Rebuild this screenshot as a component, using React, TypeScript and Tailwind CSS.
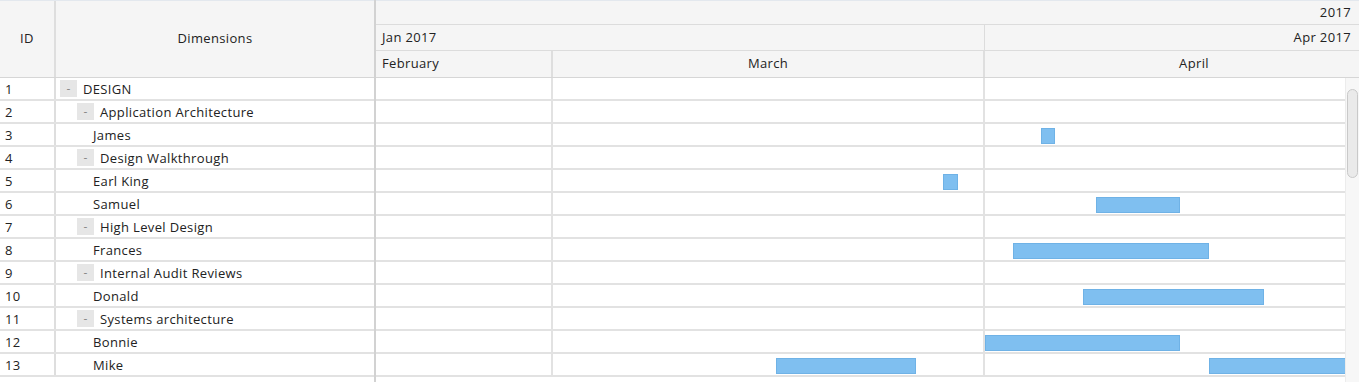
import clsx from 'clsx';

type Row = { id: number; name: string; level: 0 | 1 | 2; bars?: [number, number][] };

// bar x ranges are absolute page coords; timeline starts at 376
const ROWS: Row[] = [
  { id: 1, name: 'DESIGN', level: 0 },
  { id: 2, name: 'Application Architecture', level: 1 },
  { id: 3, name: 'James', level: 2, bars: [[1041, 1055]] },
  { id: 4, name: 'Design Walkthrough', level: 1 },
  { id: 5, name: 'Earl King', level: 2, bars: [[943, 958]] },
  { id: 6, name: 'Samuel', level: 2, bars: [[1096, 1180]] },
  { id: 7, name: 'High Level Design', level: 1 },
  { id: 8, name: 'Frances', level: 2, bars: [[1013, 1209]] },
  { id: 9, name: 'Internal Audit Reviews', level: 1 },
  { id: 10, name: 'Donald', level: 2, bars: [[1083, 1264]] },
  { id: 11, name: 'Systems architecture', level: 1 },
  { id: 12, name: 'Bonnie', level: 2, bars: [[985, 1180]] },
  { id: 13, name: 'Mike', level: 2, bars: [[776, 916], [1209, 1347]] },
];

const TIMELINE_X = 376;

function Toggle() {
  return (
    <span className="w-[17px] h-[17px] bg-[#e6e6e6] flex items-center justify-center text-[#8a8a8a] text-[12px] leading-none tracking-normal">
      -
    </span>
  );
}

export default function App() {
  return (
    <div
      className="w-[1359px] h-[382px] overflow-hidden bg-white text-[#222] text-[13px] tracking-[0.35px] flex"
      style={{ fontFamily: '"Open Sans", "DejaVu Sans", sans-serif' }}
    >
      {/* Left grid */}
      <div className="w-[374px] flex flex-col shrink-0">
        <div className="h-[78px] flex bg-[#f5f5f5] border-b border-[#d6d6d6] border-t border-t-[#e3e8ee] shrink-0">
          <div className="w-[56px] border-r-2 border-[#dedede] flex items-center justify-center">ID</div>
          <div className="flex-1 flex items-center justify-center">Dimensions</div>
        </div>
        {ROWS.map((row) => (
          <div key={row.id} className="h-[23px] flex border-b-2 border-[#e2e2e2] shrink-0">
            <div className="w-[56px] border-r-2 border-[#dedede] flex items-center pl-[5px] pt-[2px]">{row.id}</div>
            <div
              className={clsx(
                'flex-1 flex items-center',
                row.level === 0 && 'pl-[4px]',
                row.level === 1 && 'pl-[21px]',
                row.level === 2 && 'pl-[37px]'
              )}
            >
              {row.level < 2 && <Toggle />}
              <span className={clsx('pt-[2px]', row.level < 2 && 'ml-[6px]')}>{row.name}</span>
            </div>
          </div>
        ))}
      </div>

      {/* Splitter */}
      <div className="w-[2px] bg-[#d2d2d2] shrink-0" />

      {/* Timeline */}
      <div className="flex-1 flex flex-col relative">
        <div className="h-[25px] bg-[#f5f5f5] border-b border-[#dcdcdc] border-t border-t-[#e3e8ee] flex items-center justify-end pr-[8px] shrink-0">
          2017
        </div>
        <div className="h-[26px] bg-[#f5f5f5] border-b border-[#dcdcdc] flex shrink-0">
          <div className="w-[609px] border-r border-[#dcdcdc] flex items-center pl-[6px]">Jan 2017</div>
          <div className="flex-1 flex items-center justify-end pr-[8px]">Apr 2017</div>
        </div>
        <div className="h-[27px] bg-[#f5f5f5] border-b border-[#d6d6d6] flex shrink-0">
          <div className="w-[177px] border-r-2 border-[#dedede] flex items-center pl-[6px]">February</div>
          <div className="w-[432px] border-r-2 border-[#dedede] flex items-center justify-center">March</div>
          <div className="flex-1 flex items-center justify-center pl-[44px]">April</div>
        </div>
        {ROWS.map((row) => (
          <div key={row.id} className="h-[23px] flex border-b-2 border-[#e2e2e2] relative shrink-0">
            <div className="w-[177px] border-r-2 border-[#e2e2e2]" />
            <div className="w-[432px] border-r-2 border-[#e2e2e2]" />
            <div className="flex-1" />
            {row.bars?.map(([x1, x2]) => (
              <div
                key={x1}
                className="absolute top-[4px] h-[16px] bg-[#7fbff0] border border-[#6fb2e6]"
                style={{ left: x1 - TIMELINE_X, width: x2 - x1 }}
              />
            ))}
          </div>
        ))}

        {/* Scrollbar */}
        <div className="absolute right-0 top-[78px] bottom-0 w-[14px] bg-[#f7f7f7] border-l border-[#ececec]">
          <div className="mt-[11px] ml-[1px] w-[11px] h-[89px] rounded-full bg-[#eaeaea] border border-[#c9c9c9]" />
        </div>
      </div>
    </div>
  );
}
